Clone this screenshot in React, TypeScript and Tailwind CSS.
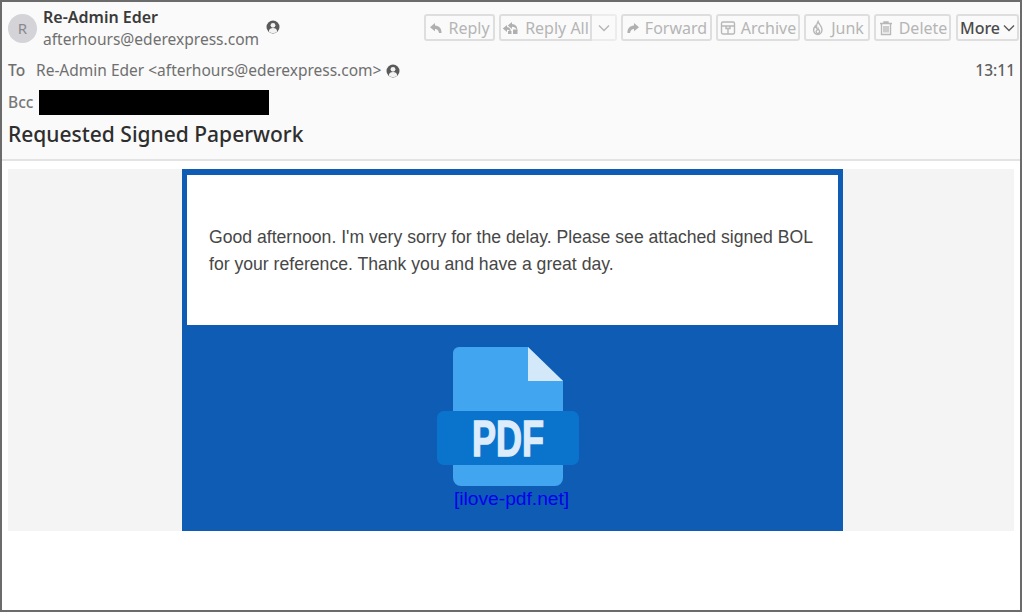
import React from "react";

const ui = { fontFamily: '"Noto Sans", "Open Sans", sans-serif' };
const body = { fontFamily: '"Liberation Sans", Arial, sans-serif' };

function ContactIcon({ className }: { className?: string }) {
  return (
    <svg viewBox="0 0 14 14" className={className} aria-hidden="true">
      <circle cx="7" cy="7" r="6.5" fill="#5a5a5a" />
      <circle cx="7" cy="5.3" r="2.4" fill="#f2f2f2" />
      <path d="M2.8 11.4c.3-2.4 2-3.4 4.2-3.4s3.900 1 4.200 3.400c-1 1-2.600 1.600-4.200 1.600s-3.200-.6-4.200-1.600z" fill="#f2f2f2" />
    </svg>
  );
}

function ReplyIcon() {
  return (
    <svg viewBox="0 0 14 14" className="w-[14px] h-[14px]" fill="#b0b0b0" aria-hidden="true">
      <path d="M6 2 1 6.200l5 4.100V8c2.500 0 3.200 1 4 4h2.500c.2-4.500-2.200-7.200-6.500-7.500z" />
    </svg>
  );
}

function ReplyAllIcon() {
  return (
    <svg viewBox="0 0 18 14" className="w-[18px] h-[14px]" fill="#b0b0b0" aria-hidden="true">
      <path d="M5 4 .8 7.500 5 11V8.800c1.800 0 3 .6 3.800 2.700.3-3.300-1.300-5-3.800-5.400z" />
      <path d="M10 1 5.800 4.500 10 8V5.800c2.400 0 4.200 1 5.200 4.200.6-4.600-1.800-6.700-5.200-7z" />
      <path d="M11 8.500h4.500V13H11z" />
      <path d="M6 10h3.500v3H6z" />
    </svg>
  );
}

function ForwardIcon() {
  return (
    <svg viewBox="0 0 14 14" className="w-[14px] h-[14px]" fill="#b0b0b0" aria-hidden="true">
      <path d="M8 2l5 4.200-5 4.100V8c-2.500 0-3.200 1-4 4H1.500C1.300 7.500 3.700 4.800 8 4.500z" />
    </svg>
  );
}

function ArchiveIcon() {
  return (
    <svg viewBox="0 0 16 16" className="w-[16px] h-[16px]" fill="none" stroke="#b8b8b8" strokeWidth="1.400" aria-hidden="true">
      <rect x="1.500" y="2" width="13" height="12" rx="1.500" />
      <path d="M1.500 6h13M6 6v2.500h4V6M8 8.500V14" />
    </svg>
  );
}

function JunkIcon() {
  return (
    <svg viewBox="0 0 16 16" className="w-[16px] h-[16px]" fill="none" stroke="#b8b8b8" strokeWidth="1.400" aria-hidden="true">
      <path d="M8 1.500c.5 2.500 4 4.200 4 8.200 0 2.800-1.800 4.800-4.200 4.800S3.600 12.600 3.600 10c0-1.800.8-3 1.700-4 .1 1 .5 1.600 1.100 2 0-2.500.6-4.800 1.600-6.500z" />
      <path d="M8 8.500c.4 1.200 1.600 1.800 1.600 3.200 0 1-.8 1.800-1.800 1.800s-1.700-.8-1.700-1.700c0-1.300 1.400-1.900 1.900-3.300z" />
    </svg>
  );
}

function TrashIcon() {
  return (
    <svg viewBox="0 0 16 16" className="w-[16px] h-[16px]" fill="none" stroke="#b8b8b8" strokeWidth="1.400" aria-hidden="true">
      <path d="M2 3.500h12M6 3.500V2h4v1.500M3.500 3.500V14.500h9V3.500M6 6v6.500M8 6v6.500M10 6v6.500" />
    </svg>
  );
}

function Chevron({ color }: { color: string }) {
  return (
    <svg viewBox="0 0 12 8" className="w-[12px] h-[8px]" fill="none" stroke={color} strokeWidth="1.400" aria-hidden="true">
      <path d="M1 1.500 6 6.500l5-5" />
    </svg>
  );
}

function ToolButton({ icon, label, className }: { icon: React.ReactNode; label: string; className: string }) {
  return (
    <div className={`h-[27px] shrink-0 flex items-center justify-center gap-[5px] rounded-[3px] border-2 border-[#dedede] text-[16px] text-[#b5b5b5] ${className}`}>
      {icon}
      <span>{label}</span>
    </div>
  );
}

export default function App() {
  return (
    <div className="w-[1022px] h-[612px] border-2 border-[#6b6b6b] bg-white overflow-hidden flex flex-col" style={ui}>
      <header className="h-[159px] shrink-0 bg-[#fafafa] border-b-2 border-[#e3e3e3] px-[6px] flex flex-col">
        <div className="h-[54px] shrink-0 flex items-start">
          <div className="mt-[12px] w-[29px] h-[29px] rounded-full bg-[#d3d3d8] flex items-center justify-center text-[15px] text-[#8a8a8e] shrink-0">R</div>
          <div className="ml-[6px] mt-[4px] flex flex-col shrink-0">
            <span className="text-[16px] leading-[22px] font-semibold text-[#3a3a3a]">Re-Admin Eder</span>
            <span className="text-[15.550px] leading-[22px] text-[#707070]">afterhours@ederexpress.com</span>
          </div>
          <ContactIcon className="mt-[18px] ml-[7px] w-[14px] h-[14px] shrink-0" />
          <div className="ml-auto mt-[12px] mr-[-5px] flex items-center gap-[4px]">
            <ToolButton icon={<ReplyIcon />} label="Reply" className="w-[71px]" />
            <div className="flex shrink-0">
              <ToolButton icon={<ReplyAllIcon />} label="Reply All" className="w-[93px] rounded-r-none" />
              <div className="w-[25px] h-[27px] border-2 border-l-0 border-[#ececec] rounded-r-[3px] flex items-center justify-center">
                <Chevron color="#b5b5b5" />
              </div>
            </div>
            <ToolButton icon={<ForwardIcon />} label="Forward" className="w-[91px]" />
            <ToolButton icon={<ArchiveIcon />} label="Archive" className="w-[84px]" />
            <ToolButton icon={<JunkIcon />} label="Junk" className="w-[66px]" />
            <ToolButton icon={<TrashIcon />} label="Delete" className="w-[77px]" />
            <div className="h-[27px] w-[63px] shrink-0 ml-[1px] flex items-center justify-center gap-[3px] rounded-[3px] border-2 border-[#dedede] text-[16px] font-medium text-[#4a4a4a]">
              <span>More</span>
              <Chevron color="#5a5a5a" />
            </div>
          </div>
        </div>
        <div className="h-[29px] shrink-0 flex items-center text-[15.500px] text-[#6f6f6f]">
          <span className="font-medium w-[28px]">To</span>
          <span>Re-Admin Eder &lt;afterhours@ederexpress.com&gt;</span>
          <ContactIcon className="ml-[5px] w-[14px] h-[14px]" />
          <span className="ml-auto mr-[-1px] font-medium text-[#5f5f5f]">13:11</span>
        </div>
        <div className="h-[27px] mt-[4px] shrink-0 flex items-center">
          <span className="text-[15.500px] font-medium text-[#777] w-[31px]">Bcc</span>
          <div className="w-[230px] h-[25px] bg-black" />
        </div>
        <h1 className="text-[21px] leading-[36px] font-medium text-[#2e2e2e]">Requested Signed Paperwork</h1>
      </header>

      <main className="px-[6px] pt-[8px] flex-1">
        <div className="h-[362px] bg-[#f4f4f4] flex justify-center pl-[3px]">
          <div className="w-[661px] h-full bg-[#0f5cb5] pt-[6px] flex flex-col items-center">
            <div className="w-[651px] h-[150px] bg-white px-[22px] pt-[47px] text-[17.620px] leading-[27px] text-[#474747]" style={body}>
              <p className="mt-[2px]">Good afternoon. I'm very sorry for the delay. Please see attached signed BOL for your reference. Thank you and have a great day.</p>
            </div>
            <div className="relative w-[142px] h-[139px] mt-[22px] mr-[9px] shrink-0">
              <svg viewBox="0 0 142 139" className="w-[142px] h-[139px]" role="img" aria-label="PDF">
                <path d="M22 0h69l35 34v97a8 8 0 0 1-8 8H24a8 8 0 0 1-8-8V6a6 6 0 0 1 6-6z" fill="#42a5f0" />
                <path d="M91 0l35 34H91z" fill="#d3e8f9" />
                <rect x="0" y="64" width="142" height="54" rx="7" fill="#0a74cd" />
                <text x="71" y="109" textAnchor="middle" textLength="72" lengthAdjust="spacingAndGlyphs" fontSize="50" fontWeight="700" fill="#dcecfa" stroke="#dcecfa" strokeWidth="1.500" style={body}>PDF</text>
              </svg>
              <a href="#" className="absolute left-[17px] top-[142px] whitespace-nowrap text-[19.200px] leading-[20px] text-[#0000ee]" style={body}>[ilove-pdf.net]</a>
            </div>
          </div>
        </div>
      </main>
    </div>
  );
}
